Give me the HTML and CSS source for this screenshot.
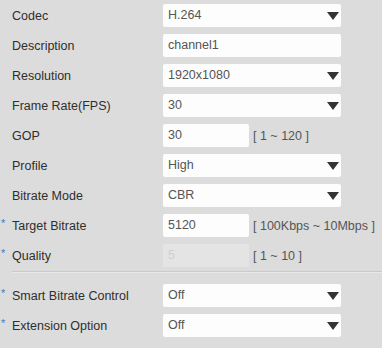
FILE: index.html
```html
<!DOCTYPE html>
<html lang="en">
    <head>
        <meta name="viewport" content="width=device-width, initial-scale=1.0">
        <title>Video</title>
        <link rel="stylesheet" href="styles.css">
    </head>
    <body>
        <div class="form">
            <div class="row">
                <div class="lbl">Codec</div>
                <div class="sel">H.264<span class="arr"></span></div>
            </div>
            <div class="row">
                <div class="lbl">Description</div>
                <div class="sel">channel1</div>
            </div>
            <div class="row">
                <div class="lbl">Resolution</div>
                <div class="sel">1920x1080<span class="arr"></span></div>
            </div>
            <div class="row">
                <div class="lbl">Frame Rate(FPS)</div>
                <div class="sel">30<span class="arr"></span></div>
            </div>
            <div class="row">
                <div class="lbl">GOP</div>
                <div class="inp">30</div>
                <div class="rng">[ 1 ~ 120 ]</div>
            </div>
            <div class="row">
                <div class="lbl">Profile</div>
                <div class="sel">High<span class="arr"></span></div>
            </div>
            <div class="row">
                <div class="lbl">Bitrate Mode</div>
                <div class="sel">CBR<span class="arr"></span></div>
            </div>
            <div class="row">
                <div class="lbl"><span class="star">*</span>Target Bitrate</div>
                <div class="inp">5120</div>
                <div class="rng">[ 100Kbps ~ 10Mbps ]</div>
            </div>
            <div class="row">
                <div class="lbl"><span class="star">*</span>Quality</div>
                <div class="inp off">5</div>
                <div class="rng">[ 1 ~ 10 ]</div>
            </div>
            <div class="line"></div>
            <div class="row">
                <div class="lbl"><span class="star">*</span>Smart Bitrate Control</div>
                <div class="sel">Off<span class="arr"></span></div>
            </div>
            <div class="row">
                <div class="lbl"><span class="star">*</span>Extension Option</div>
                <div class="sel">Off<span class="arr"></span></div>
            </div>
        </div>
    </body>
</html>
```
FILE: styles.css
```css
body {
    margin: 0;
    background-color: #dcdcdc;
    font-family: "Liberation Sans", Arial, sans-serif;
    font-size: 12.5px;
    color: #333;
}
.form {
    padding-top: 4px;
}
.row {
    display: flex;
    align-items: center;
    height: 23px;
    margin-bottom: 7px;
}
.lbl {
    width: 163px;
    box-sizing: border-box;
    padding-left: 12px;
    position: relative;
    color: #2e2e2e;
}
.star {
    position: absolute;
    left: 1px;
    top: -2px;
    color: #4a78c0;
    font-size: 11px;
}
.sel, .inp {
    height: 23px;
    box-sizing: border-box;
    background-color: #fdfdfd;
    border-radius: 2px;
    padding-left: 5px;
    line-height: 23px;
    color: #555;
    position: relative;
}
.sel {
    width: 178px;
}
.inp {
    width: 86px;
}
.inp.off {
    background-color: #e4e4e4;
    color: #d0d0d0;
}
.arr {
    position: absolute;
    right: 2px;
    top: 8px;
    border-left: 6px solid transparent;
    border-right: 6px solid transparent;
    border-top: 8px solid #333;
}
.rng {
    margin-left: 4px;
    color: #555;
}
.line {
    margin: -3px 0 11px 12px;
    height: 1px;
    background-color: #cacaca;
    border-bottom: 1px solid #e8e8e8;
}
```
